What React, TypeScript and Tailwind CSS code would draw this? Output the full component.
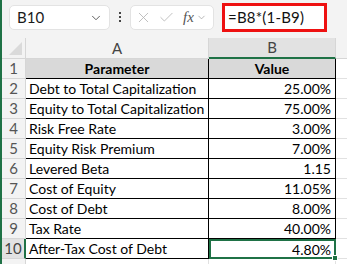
import { X, Check, ChevronDown } from 'lucide-react'

const rows: [string, string][] = [
  ['Debt to Total Capitalization', '25.00%'],
  ['Equity to Total Capitalization', '75.00%'],
  ['Risk Free Rate', '3.00%'],
  ['Equity Risk Premium', '7.00%'],
  ['Levered Beta', '1.15'],
  ['Cost of Equity', '11.05%'],
  ['Cost of Debt', '8.00%'],
  ['Tax Rate', '40.00%'],
  ['After-Tax Cost of Debt', '4.80%'],
]

function Toolbar() {
  return (
    <div className="flex h-[38px] shrink-0 items-start">
      <div className="ml-[7px] mt-[5px] flex h-[25px] w-[101px] items-center justify-between rounded-[5px] border border-[#e3e3e3] bg-white pl-[7px] pr-[6px]">
        <span className="text-[15px] text-[#1a1a1a]">B10</span>
        <ChevronDown className="h-[14px] w-[14px] text-[#555]" strokeWidth={1.6} />
      </div>
      <div className="ml-[9px] mt-[12px] flex flex-col gap-[2px]">
        <div className="h-[2px] w-[2px] bg-[#444]" />
        <div className="h-[2px] w-[2px] bg-[#444]" />
        <div className="h-[2px] w-[2px] bg-[#444]" />
      </div>
      <div className="ml-[9px] mt-[5px] flex h-[25px] w-[84px] items-center rounded-[5px] border border-[#e3e3e3] bg-white pl-[4px]">
        <X className="h-[17px] w-[17px] text-[#b5b5b5]" strokeWidth={1.2} />
        <Check className="ml-[6px] h-[17px] w-[17px] text-[#b5b5b5]" strokeWidth={1.2} />
        <span className="ml-[8px] font-['Liberation_Serif',serif] text-[15px] italic text-[#555]">fx</span>
        <ChevronDown className="ml-[2px] h-[11px] w-[11px] text-[#999]" strokeWidth={1.5} />
      </div>
      <div className="ml-[8px] mt-[3px] flex h-[29px] w-[105px] items-center border-[3px] border-[#ee1111] bg-white pl-[3px]">
        <span className="text-[15px] tracking-[0.2px] text-[#111]">=B8*(1-B9)</span>
      </div>
    </div>
  )
}

export default function App() {
  return (
    <div className="flex h-[264px] w-[347px] overflow-hidden bg-[#f3f3f3] font-['Lato','Liberation_Sans',sans-serif]">
      <div className="h-full w-[2px] shrink-0 bg-[#1f7246]" />
      <div className="flex flex-1 flex-col">
        <Toolbar />
        <div className="flex h-[21px] shrink-0 text-[15px] text-[#444]">
          <div className="relative h-full w-[24px] border-b border-r border-[#d6d6d6] bg-[#f3f3f3]">
            <div className="absolute bottom-[3px] right-[3px] h-0 w-0 border-b-[13px] border-l-[13px] border-b-[#dadada] border-l-transparent" />
          </div>
          <div className="flex h-full w-[183px] items-center justify-center border-b border-r border-[#d6d6d6] bg-[#f3f3f3]">A</div>
          <div className="flex h-full w-[127px] items-center justify-center border-b-2 border-r border-b-[#1f7246] border-r-[#d6d6d6] bg-[#e2e2e2]">B</div>
          <div className="h-full flex-1 border-b border-[#d6d6d6] bg-[#f3f3f3]" />
        </div>
        <div className="flex shrink-0 flex-col bg-white text-[14px] text-black">
          <div className="flex h-[20px] shrink-0">
            <div className="flex w-[24px] items-center justify-center border-b border-r border-[#d6d6d6] bg-[#f3f3f3] text-[15px] text-[#555]">1</div>
            <div className="flex w-[183px] items-center justify-center border-b border-r border-black bg-[#d9d9d9] font-bold">Parameter</div>
            <div className="flex w-[127px] items-center justify-center border-b border-r border-black bg-[#d9d9d9] font-bold">Value</div>
            <div className="flex-1 border-b border-[#e1e1e1]" />
          </div>
          {rows.map(([label, value], i) => {
            const last = i === rows.length - 1
            return (
              <div key={label} className="flex h-[20px] shrink-0">
                <div
                  className={
                    last
                      ? 'flex w-[24px] items-center justify-center border-b border-r-2 border-b-[#d6d6d6] border-r-[#1f7246] bg-[#e2e2e2] text-[15px] text-[#444]'
                      : 'flex w-[24px] items-center justify-center border-b border-r border-[#d6d6d6] bg-[#f3f3f3] text-[15px] text-[#555]'
                  }
                >
                  {i + 2}
                </div>
                <div className="flex w-[183px] items-center whitespace-nowrap border-b border-r border-black pl-[3px]">{label}</div>
                <div
                  className={
                    last
                      ? 'relative flex w-[127px] items-center justify-end border-2 border-[#1f7246] pr-[3px]'
                      : 'flex w-[127px] items-center justify-end border-b border-r border-black pr-[4px]'
                  }
                >
                  {value}
                  {last && <div className="absolute bottom-[-4px] right-[-4px] h-[6px] w-[6px] border border-white bg-[#1f7246]" />}
                </div>
                <div className="flex-1 border-b border-[#e1e1e1]" />
              </div>
            )
          })}
          <div className="flex h-[20px] shrink-0">
            <div className="w-[24px] border-r border-[#d6d6d6] bg-[#f3f3f3]" />
            <div className="w-[183px] border-r border-[#e1e1e1]" />
            <div className="w-[127px] border-r border-[#e1e1e1]" />
            <div className="flex-1" />
          </div>
        </div>
      </div>
    </div>
  )
}
